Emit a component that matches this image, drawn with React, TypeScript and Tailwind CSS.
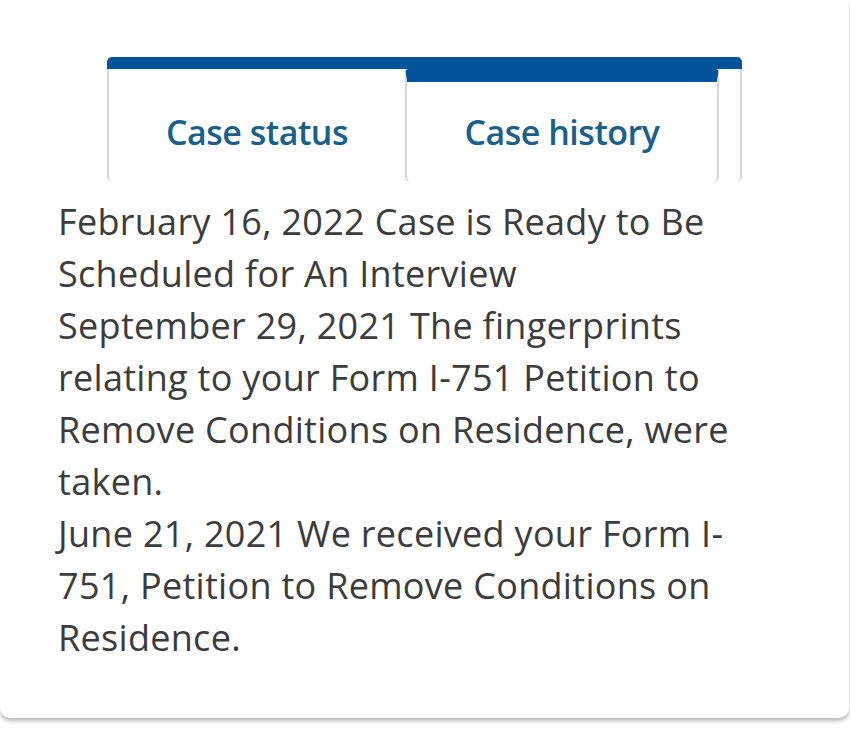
import React from "react";

const lines = [
  "February 16, 2022 Case is Ready to Be",
  "Scheduled for An Interview",
  "September 29, 2021 The fingerprints",
  "relating to your Form I-751 Petition to",
  "Remove Conditions on Residence, were",
  "taken.",
  "June 21, 2021 We received your Form I-",
  "751, Petition to Remove Conditions on",
  "Residence.",
];

export default function App() {
  return (
    <div className="w-[850px] h-[750px] bg-white overflow-hidden" style={{ fontFamily: "'Open Sans', Lato, sans-serif" }}>
      <div className="w-[849px] h-[718px] bg-white rounded-b-[10px] shadow-[0_3px_4px_rgba(0,0,0,0.28)] pt-[57px]">
        <div className="ml-[107px] w-[635px] h-[125px] border-t-[12px] border-[#02539a] rounded-t-[5px] flex">
          <div className="w-[298px] h-full border-l-2 border-l-[#d6d6d6] rounded-bl-[6px] flex justify-center pt-[41px] text-[#1b5f8c] font-semibold text-[34px] leading-[44px] tracking-[-0.5px]">
            Case status
          </div>
          <div className="w-[314px] h-full border-t-[13px] border-t-[#02539a] border-x-2 border-x-[#d6d6d6] rounded-t-[4px] rounded-b-[6px] flex justify-center pt-[28px] text-[#1b5f8c] font-semibold text-[34px] leading-[44px] tracking-[-0.5px]">
            Case history
          </div>
          <div className="flex-1 h-full border-r-2 border-r-[#d6d6d6] rounded-br-[6px]" />
        </div>
        <div className="ml-[58px] mt-[14px] text-[#3c3c3c] text-[36px] leading-[52px] tracking-[0.3px]">
          {lines.map((l, i) => (
            <div key={i} className="whitespace-nowrap">{l}</div>
          ))}
        </div>
      </div>
    </div>
  );
}
